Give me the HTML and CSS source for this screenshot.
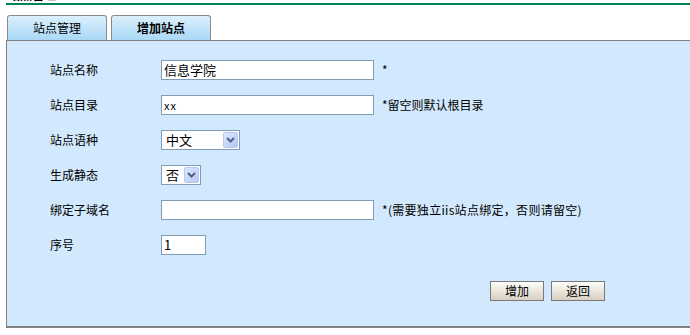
FILE: index.html
```html
<!DOCTYPE html>
<html>
<head>
<meta charset="utf-8">
<link rel="stylesheet" href="styles.css">
</head>
<body>
<div class="page">
  <div class="title"><span>站点管理</span></div>
  <div class="tabs">
    <div class="tab">站点管理</div>
    <div class="tab active">增加站点</div>
  </div>
  <div class="panel">
    <div class="form">
      <div class="row">
        <div class="label">站点名称</div>
        <div class="field"><div class="input wide">信息学院</div><span class="note">*</span></div>
      </div>
      <div class="row">
        <div class="label">站点目录</div>
        <div class="field"><div class="input wide small">xx</div><span class="note">*留空则默认根目录</span></div>
      </div>
      <div class="row">
        <div class="label">站点语种</div>
        <div class="field">
          <div class="select lang"><span class="val">中文</span><span class="arrow"><svg width="9" height="6" viewBox="0 0 9 6"><path d="M1 1 L4.5 4.5 L8 1" fill="none" stroke="#4d6185" stroke-width="2"/></svg></span></div>
        </div>
      </div>
      <div class="row">
        <div class="label">生成静态</div>
        <div class="field">
          <div class="select yn"><span class="val">否</span><span class="arrow"><svg width="9" height="6" viewBox="0 0 9 6"><path d="M1 1 L4.5 4.5 L8 1" fill="none" stroke="#4d6185" stroke-width="2"/></svg></span></div>
        </div>
      </div>
      <div class="row">
        <div class="label">绑定子域名</div>
        <div class="field"><div class="input wide"></div><span class="note wider">*(需要独立iis站点绑定，否则请留空)</span></div>
      </div>
      <div class="row">
        <div class="label">序号</div>
        <div class="field"><div class="input num">1</div></div>
      </div>
    </div>
    <div class="actions">
      <button class="btn">增加</button>
      <button class="btn">返回</button>
    </div>
  </div>
</div>
</body>
</html>
```
FILE: styles.css
```css
html, body {
  margin: 0;
  padding: 0;
  background: #fff;
  overflow: hidden;
}
body {
  font-family: "Noto Sans CJK SC", "Liberation Sans", sans-serif;
  font-size: 12px;
  color: #000;
}
.page {
  padding-left: 6px;
  width: 700px;
}
.title {
  height: 3px;
  overflow: hidden;
  border-bottom: 2px solid #00855a;
}
.title span {
  display: block;
  margin-top: -12px;
  line-height: 13px;
  font-weight: bold;
  font-size: 12px;
  padding-left: 2px;
}
.tabs {
  display: flex;
  gap: 4px;
  margin-top: 10px;
  padding-left: 1px;
}
.tab {
  width: 98px;
  height: 24px;
  border: 1px solid #8a8a8a;
  border-bottom: none;
  border-radius: 3px 3px 0 0;
  background: linear-gradient(#dcf0fc, #a9d8f6);
  display: flex;
  align-items: center;
  justify-content: center;
  line-height: 1;
}
.tab.active {
  font-weight: bold;
}
.panel {
  border: 1px solid #808080;
  border-bottom-width: 2px;
  border-right: none;
  background: #d2e8fc;
  height: 288px;
  padding-top: 11px;
  box-sizing: border-box;
}
.form {
  display: flex;
  flex-direction: column;
}
.row {
  display: flex;
  align-items: center;
  height: 35px;
}
.label {
  width: 111px;
  padding-left: 43px;
}
.field {
  display: flex;
  align-items: center;
}
.input {
  height: 18px;
  border: 1px solid #7f9db9;
  background: #fff;
  box-sizing: content-box;
  font-size: 13px;
  line-height: 18px;
  padding-left: 2px;
}
.input.small {
  font-size: 11px;
  letter-spacing: 1px;
}
.input.wide {
  width: 209px;
}
.input.num {
  width: 41px;
}
.note {
  margin-left: 8px;
}
.note.wider {
  letter-spacing: 0.3px;
}
.select {
  height: 18px;
  border: 1px solid #7f9db9;
  background: #fff;
  display: flex;
  align-items: center;
  justify-content: space-between;
  padding: 0 1px 0 4px;
  font-size: 13px;
}
.select.lang { width: 72px; }
.select.yn { width: 33px; }
.arrow {
  width: 15px;
  height: 16px;
  border-radius: 2px;
  background: linear-gradient(135deg, #dce8ff, #b5c8f4);
  border: 1px solid #b8c9ef;
  box-sizing: border-box;
  display: flex;
  align-items: center;
  justify-content: center;
}
.actions {
  display: flex;
  gap: 7px;
  padding-left: 483px;
  margin-top: 19px;
}
.btn {
  width: 54px;
  height: 20px;
  border: 1px solid #7a7a7a;
  background: linear-gradient(#fdfdfb, #d8d0c0);
  font-family: "Noto Sans CJK SC", sans-serif;
  font-size: 12px;
  padding: 0;
  line-height: 1;
  color: #000;
}
```
